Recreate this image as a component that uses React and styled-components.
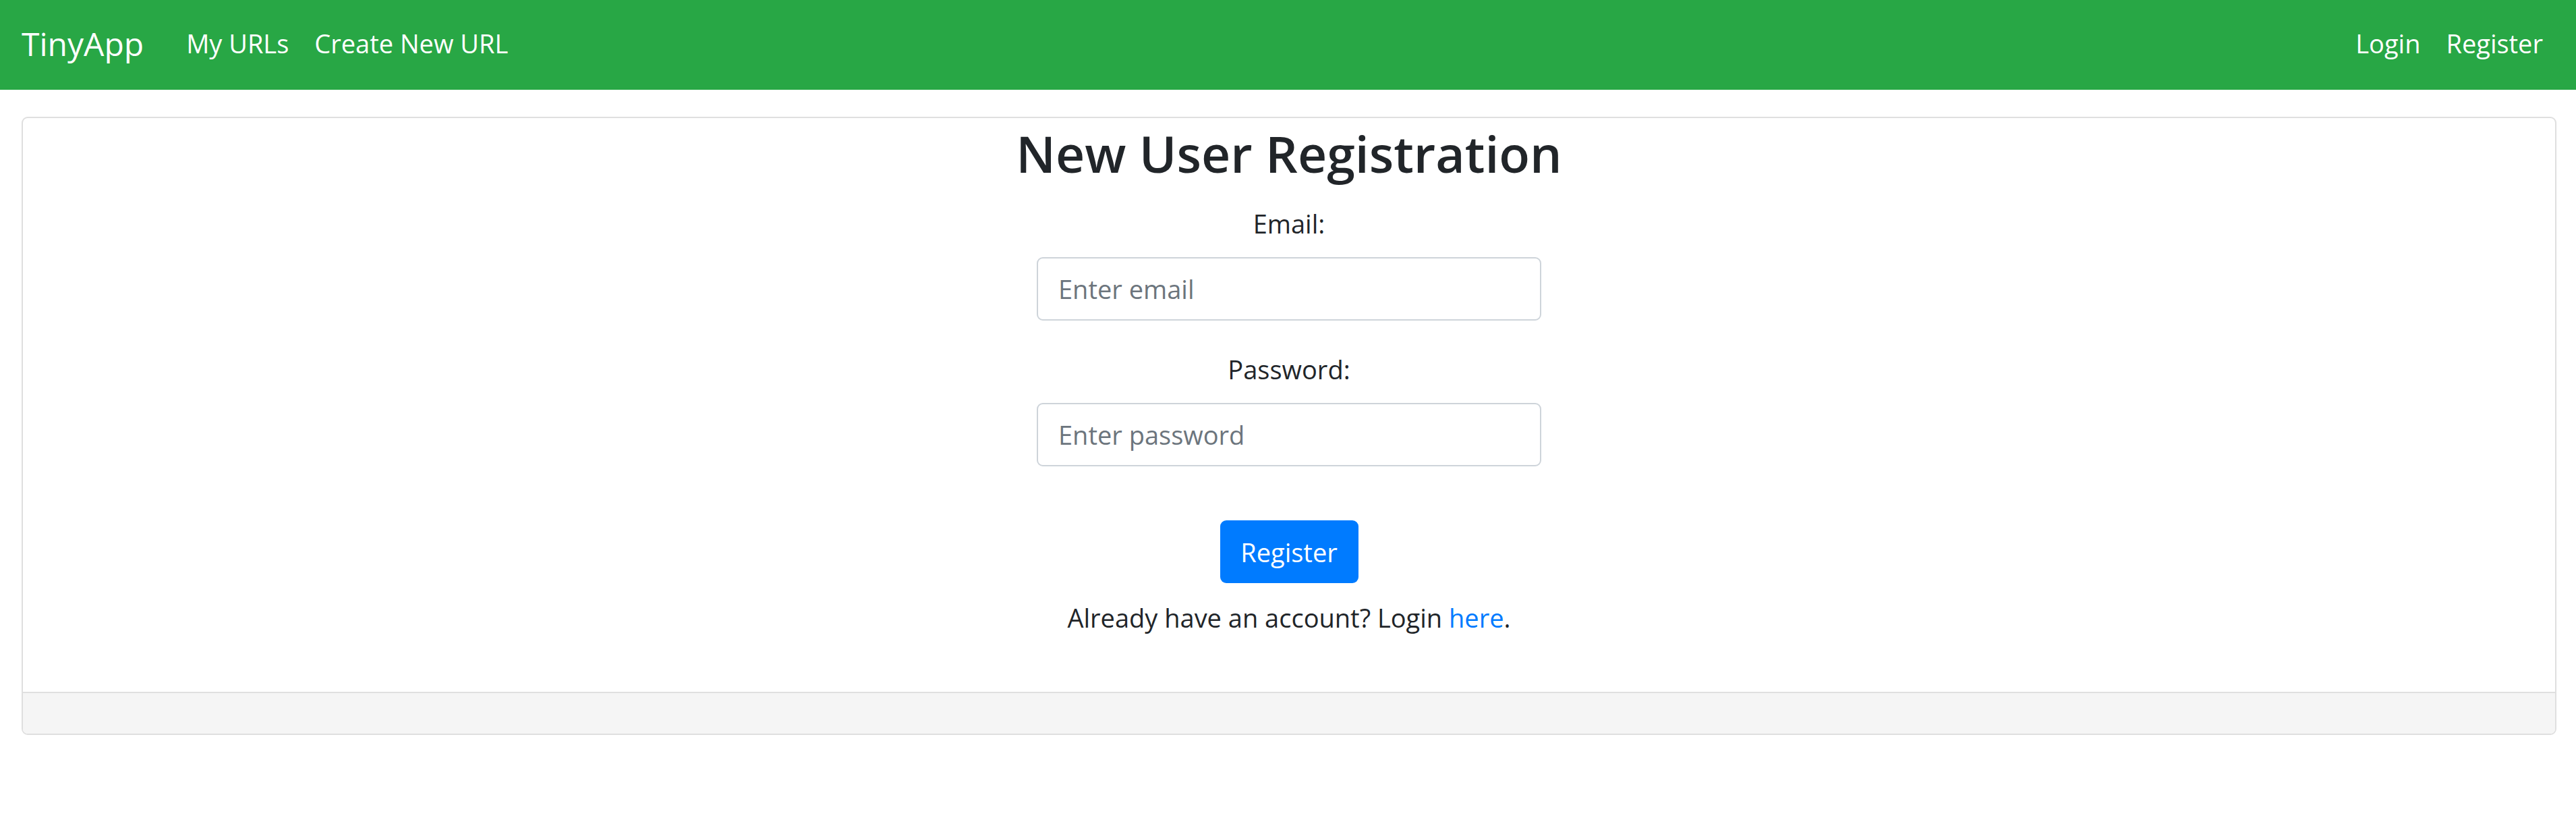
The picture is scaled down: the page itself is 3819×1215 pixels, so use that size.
import React from "react";
import styled, { createGlobalStyle } from "styled-components";

const GlobalStyle = createGlobalStyle`
  html, body { margin: 0; padding: 0; background: #ffffff; }
  body {
    font-family: "Open Sans", "Noto Sans", "Liberation Sans", sans-serif;
    color: #212529;
  }
  * { box-sizing: border-box; }
`;

const Navbar = styled.nav`
  height: 133px;
  background: #28a745;
  display: flex;
  align-items: flex-start;
  justify-content: space-between;
  padding: 0 30px 0 32px;
`;

const NavGroup = styled.div`
  display: flex;
  align-items: flex-start;
`;

const Brand = styled.a`
  font-size: 48px;
  line-height: 129px;
  color: #ffffff;
  text-decoration: none;
  margin-right: 44px;
`;

const NavLink = styled.a`
  font-size: 38px;
  line-height: 129px;
  color: #ffffff;
  text-decoration: none;
  padding: 0 19px;
`;

const Card = styled.section`
  margin: 40px 29px 0 32px;
  border: 2px solid #dfdfdf;
  border-radius: 9px;
  overflow: hidden;
`;

const CardBody = styled.div`
  display: flex;
  flex-direction: column;
  align-items: center;
  padding: 7px 0 81px;
  text-align: center;
`;

const Title = styled.h1`
  margin: 0 0 30px;
  font-size: 75px;
  font-weight: 600;
  line-height: 91px;
  color: #212529;
`;

const Form = styled.form`
  display: flex;
  flex-direction: column;
  align-items: center;
  width: 748px;
`;

const Label = styled.label`
  font-size: 38px;
  line-height: 57px;
  margin-bottom: 21px;
`;

const Input = styled.input`
  width: 748px;
  height: 94px;
  padding: 0 30px;
  font-family: inherit;
  font-size: 38px;
  color: #495057;
  border: 2px solid #ced4da;
  border-radius: 9px;
  background: #ffffff;
  outline: none;
  margin-bottom: ${(p) => p.$gap}px;
  &::placeholder { color: #6c757d; opacity: 1; }
`;

const Button = styled.button`
  width: 205px;
  height: 93px;
  padding: 0;
  font-family: inherit;
  font-size: 38px;
  color: #ffffff;
  background: #007bff;
  border: none;
  border-radius: 9px;
  cursor: pointer;
  margin-bottom: 23px;
`;

const Note = styled.p`
  margin: 0;
  font-size: 38px;
  line-height: 57px;
`;

const Link = styled.a`
  color: #007bff;
  text-decoration: none;
`;

const CardFooter = styled.div`
  height: 62px;
  border-top: 2px solid #dfdfdf;
  background: #f5f5f5;
`;

export default function App() {
  return (
    <>
      <GlobalStyle />
      <Navbar>
        <NavGroup>
          <Brand href="#">TinyApp</Brand>
          <NavLink href="#">My URLs</NavLink>
          <NavLink href="#">Create New URL</NavLink>
        </NavGroup>
        <NavGroup>
          <NavLink href="#">Login</NavLink>
          <NavLink href="#">Register</NavLink>
        </NavGroup>
      </Navbar>
      <Card>
        <CardBody>
          <Title>New User Registration</Title>
          <Form onSubmit={(e) => e.preventDefault()}>
            <Label htmlFor="email">Email:</Label>
            <Input id="email" type="email" placeholder="Enter email" $gap={44} />
            <Label htmlFor="password">Password:</Label>
            <Input id="password" type="password" placeholder="Enter password" $gap={80} />
            <Button type="submit">Register</Button>
          </Form>
          <Note>
            Already have an account? Login <Link href="#">here</Link>.
          </Note>
        </CardBody>
        <CardFooter />
      </Card>
    </>
  );
}
